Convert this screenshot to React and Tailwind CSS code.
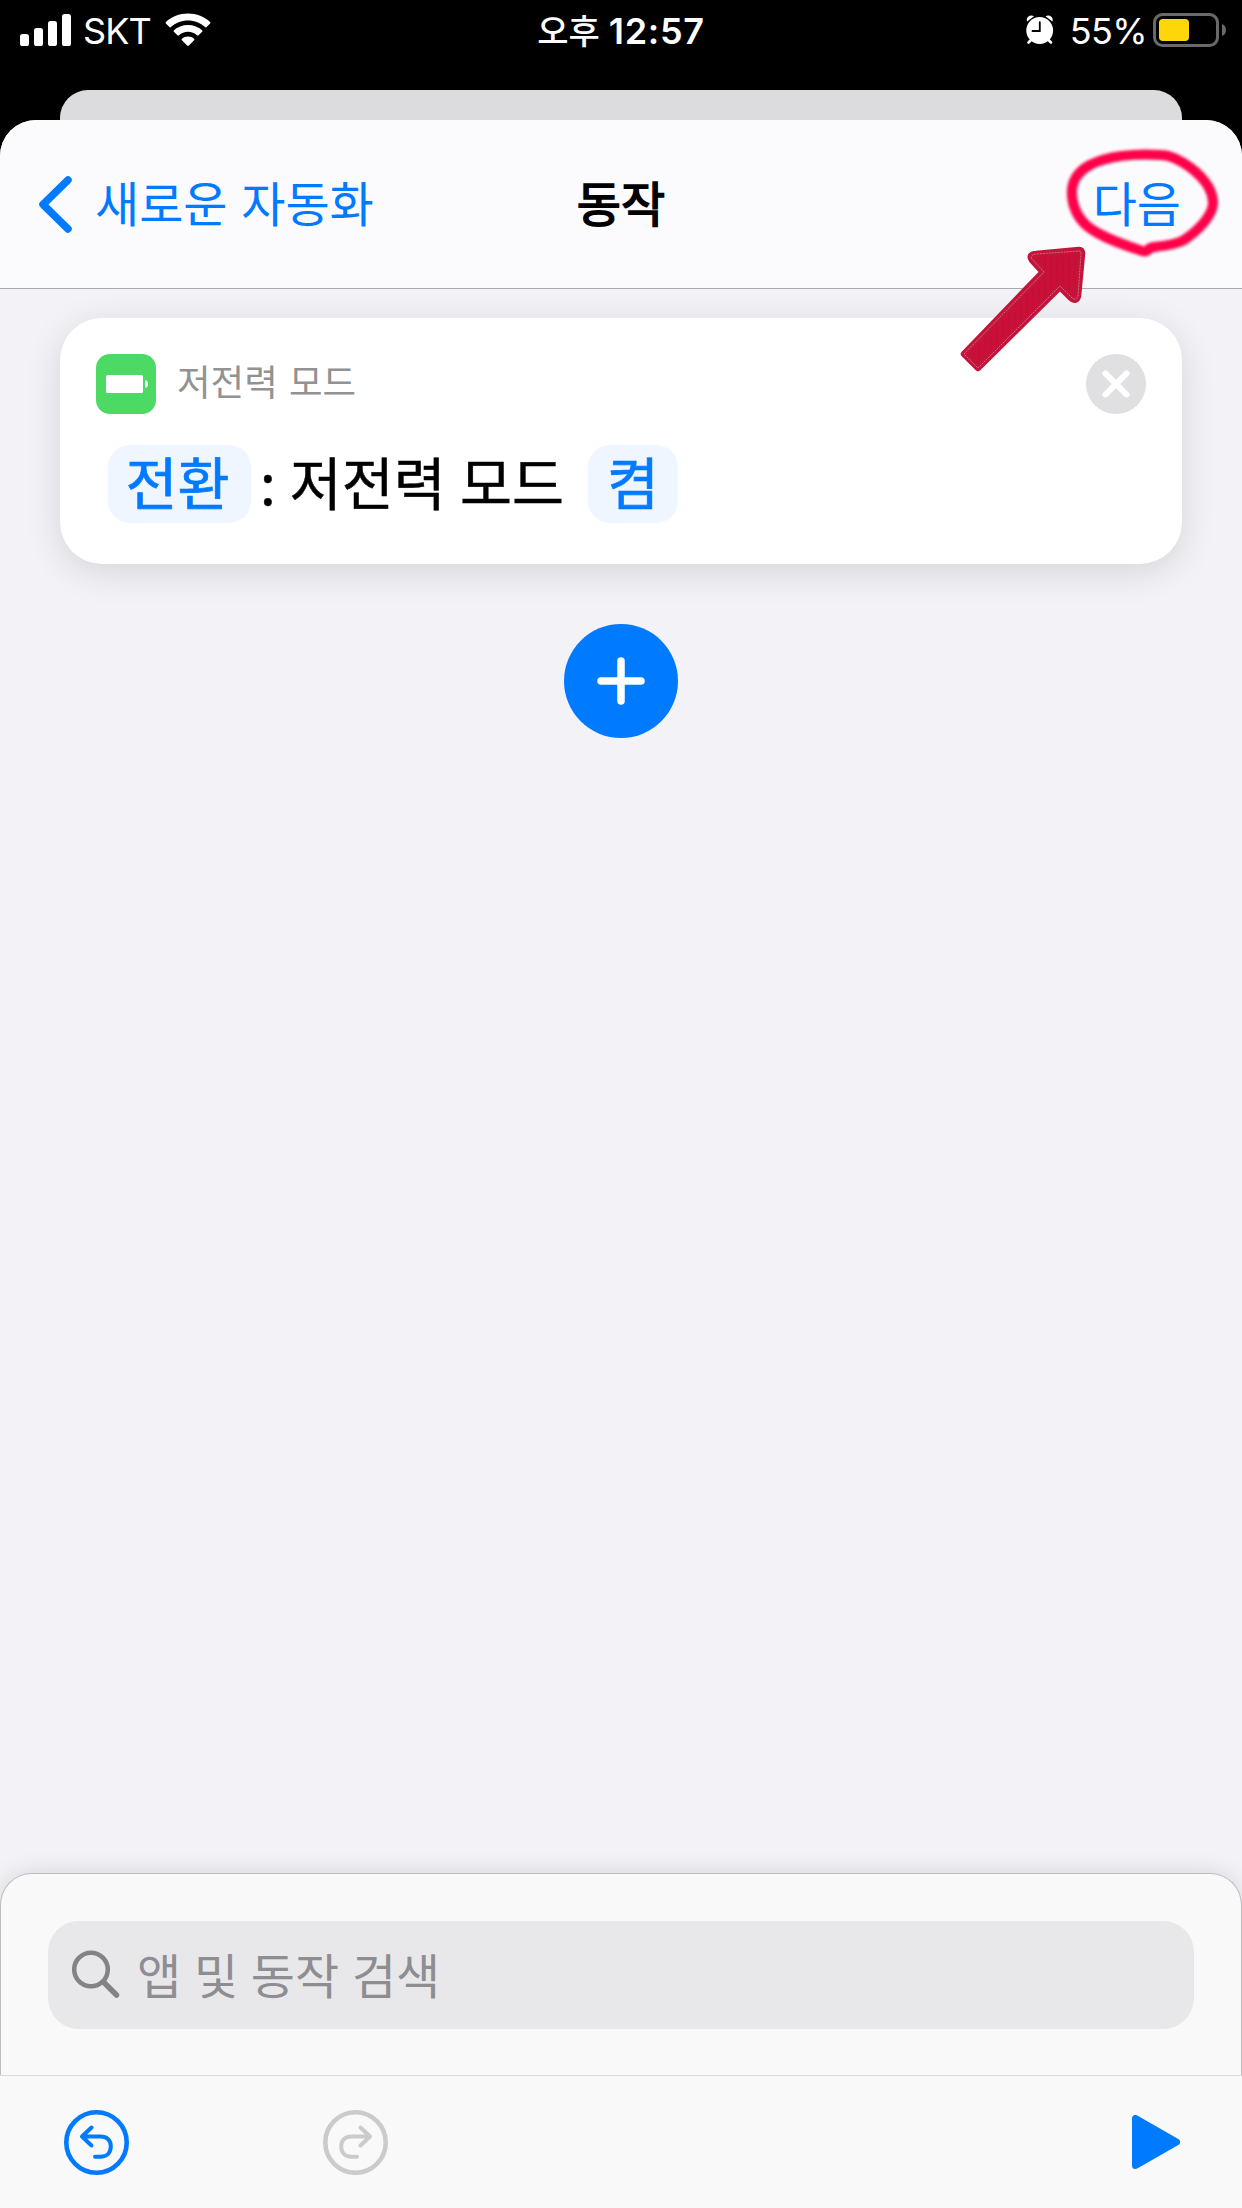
import React from "react";

function SignalIcon() {
  return (
    <svg width="51" height="32" viewBox="0 0 51 32" fill="white">
      <rect x="0" y="20" width="9" height="12" rx="2.6" />
      <rect x="14" y="14" width="9" height="18" rx="2.6" />
      <rect x="28" y="7" width="9" height="25" rx="2.6" />
      <rect x="42" y="0" width="9" height="32" rx="2.6" />
    </svg>
  );
}

function WifiIcon() {
  return (
    <svg width="46" height="34" viewBox="0 0 46 34" fill="white">
      <path d="M23 0.5C31.7 0.5 39.400 3.700 45.100 9C45.600 9.500 45.600 10 45.100 10.500L41.600 14C41.100 14.500 40.600 14.500 40.100 14C35.600 9.900 29.600 7.400 23 7.400S10.400 9.900 5.900 14C5.400 14.500 4.900 14.500 4.400 14L0.900 10.500C0.400 10 0.400 9.500 0.900 9C6.600 3.700 14.300 0.500 23 0.500Z" />
      <path d="M23 12C28.600 12 33.400 14 37.100 17.300C37.600 17.800 37.600 18.300 37.100 18.800L33.600 22.300C33.100 22.800 32.600 22.800 32.100 22.300C29.700 20.200 26.500 18.800 23 18.800S16.300 20.200 13.900 22.300C13.400 22.800 12.900 22.800 12.400 22.300L8.900 18.800C8.400 18.300 8.400 17.800 8.900 17.300C12.600 14 17.400 12 23 12Z" />
      <path d="M23 23.500C25.400 23.500 27.500 24.300 29.100 25.700C29.600 26.200 29.600 26.700 29.100 27.200L23.900 32.600C23.300 33.200 22.700 33.200 22.100 32.600L16.900 27.200C16.400 26.700 16.400 26.200 16.900 25.700C18.500 24.300 20.600 23.500 23 23.500Z" />
    </svg>
  );
}

function AlarmIcon() {
  return (
    <svg width="28" height="30" viewBox="0 0 28 30">
      <g stroke="white" strokeWidth="2.600" strokeLinecap="round">
        <path d="M5 25L2.500 27.500M22.500 25L25 27.500" />
      </g>
      <path d="M1.200 6.500C-0.600 2.500 4 -1.200 8 1.200Z" fill="white" />
      <path d="M26.300 6.500C28.100 2.500 23.500 -1.200 19.500 1.200Z" fill="white" />
      <circle cx="13.700" cy="15.500" r="13.400" fill="white" />
      <path d="M13.800 7.200V16H6.500" fill="none" stroke="black" strokeWidth="1.800" strokeLinecap="round" />
    </svg>
  );
}

function BatteryIcon() {
  return (
    <svg width="73" height="34" viewBox="0 0 73 34">
      <rect x="1.500" y="1.500" width="63" height="31" rx="8" fill="none" stroke="#69696b" strokeWidth="3" />
      <path d="M69 11C71.600 12 73 14 73 17S71.600 22 69 23Z" fill="#69696b" />
      <rect x="6" y="6" width="30" height="22" rx="4" fill="#ffd60a" />
    </svg>
  );
}

function StatusBar() {
  return (
    <div className="grid h-[60px] grid-cols-3 items-center font-['Inter','Noto_Sans_CJK_KR',sans-serif] text-white">
      <div className="flex items-center pl-5">
        <SignalIcon />
        <span className="ml-[12px] pt-[2px] text-[36px] tracking-[-0.9px]">SKT</span>
        <span className="ml-[14px]">
          <WifiIcon />
        </span>
      </div>
      <div className="flex items-center justify-center pt-[2px] text-[36px] font-semibold">
        <span className="mr-[9px] text-[34px] font-medium">오후</span>
        <span className="tracking-[0.7px]">12:57</span>
      </div>
      <div className="flex items-center justify-end pr-4">
        <AlarmIcon />
        <span className="ml-[16px] pt-[2px] text-[36px] tracking-[-0.6px]">55%</span>
        <span className="ml-[6px]">
          <BatteryIcon />
        </span>
      </div>
    </div>
  );
}

function Header() {
  return (
    <header className="grid h-[169px] grid-cols-3 items-center rounded-t-[36px] border-b border-[#a9a9b0] bg-[#fbfbfd] text-[48px] leading-none">
      <button className="flex items-center pl-[39px] text-[#007aff]">
        <svg width="33" height="57" viewBox="0 0 33 57" fill="none" stroke="#007aff" strokeWidth="7.500" strokeLinecap="round" strokeLinejoin="round">
          <path d="M29 4L4 28.500L29 53" />
        </svg>
        <span className="ml-[23px] pb-[7px] whitespace-nowrap [word-spacing:3px]">새로운 자동화</span>
      </button>
      <h1 className="pb-[7px] text-center [-webkit-text-stroke:1.6px_black]">동작</h1>
      <button className="pr-[61px] pb-[7px] text-right text-[#007aff]">다음</button>
    </header>
  );
}

function ActionCard() {
  return (
    <div className="mx-[60px] mt-[29px] h-[246px] rounded-[42px] bg-white px-9 pt-9 shadow-[0_8px_36px_rgba(0,0,0,0.12)]">
      <div className="flex items-center">
        <svg width="60" height="60" viewBox="0 0 60 60">
          <rect width="60" height="60" rx="14" fill="#4cd964" />
          <rect x="10" y="21" width="37" height="18" rx="1.500" fill="white" />
          <path d="M49 26C51 26.500 52 28 52 30S51 33.500 49 34Z" fill="white" />
        </svg>
        <span className="ml-[21px] pb-[6px] text-[36.5px] leading-none text-[#929292] [word-spacing:3px]">저전력 모드</span>
        <svg className="ml-auto" width="60" height="60" viewBox="0 0 60 60">
          <circle cx="30" cy="30" r="30" fill="#e0e0e2" />
          <path d="M19.500 19.500L40.500 40.500M40.500 19.500L19.500 40.500" stroke="white" strokeWidth="6" strokeLinecap="round" />
        </svg>
      </div>
      <div className="mt-[31px] ml-3 flex h-[78px] items-center text-[56.5px] leading-none whitespace-nowrap">
        <span className="flex h-[78px] w-[143px] items-center justify-center rounded-[22px] bg-[#f0f6ff] pr-1 pb-[7px] text-[#007aff] [-webkit-text-stroke:0.7px_#007aff]">전환</span>
        <span className="ml-[9px] pb-[7px] [-webkit-text-stroke:0.5px_black] [word-spacing:1.5px]">: 저전력 모드</span>
        <span className="ml-[24px] flex h-[78px] w-[90px] items-center justify-center rounded-[22px] bg-[#f0f6ff] pb-[7px] text-[#007aff] [-webkit-text-stroke:0.7px_#007aff]">켬</span>
      </div>
    </div>
  );
}

function SearchPanel() {
  return (
    <div className="h-[202px] rounded-t-[32px] border-x border-t border-[#bebec1] bg-[#f9f9f9] px-[47px] pt-[47px] shadow-[0_0_24px_rgba(0,0,0,0.12)]">
      <div className="flex h-[108px] items-center rounded-[31px] bg-[#e8e8ea] pl-6 text-[#8e8e92]">
        <svg className="mb-[2px]" width="48" height="48" viewBox="0 0 48 48" fill="none" stroke="#838387" strokeLinecap="round">
          <circle cx="19" cy="19.500" r="16.800" strokeWidth="4.500" />
          <path d="M32 32.500L44.500 45" strokeWidth="5.500" />
        </svg>
        <span className="ml-[17px] pb-[5px] text-[48px] leading-none [word-spacing:2px]">앱 및 동작 검색</span>
      </div>
    </div>
  );
}

function UndoIcon() {
  return (
    <svg width="65" height="65" viewBox="0 0 65 65" fill="none" stroke="currentColor" strokeLinecap="round" strokeLinejoin="round">
      <circle cx="32.500" cy="32.500" r="30.200" strokeWidth="4.600" />
      <path d="M27.500 17.500L18 26.500L27.500 35.500M18 26.500H36.500C43 26.500 46.800 30.500 46.800 36.500S43 46.700 36.500 46.700H31" strokeWidth="4" />
    </svg>
  );
}

function Toolbar() {
  return (
    <div className="flex h-[133px] items-center border-t border-[#dadadc] bg-[#f9f9f9] pr-[62px] pl-16">
      <button className="text-[#007aff]">
        <UndoIcon />
      </button>
      <button className="ml-[194px] -scale-x-100 text-[#cbcbcb]">
        <UndoIcon />
      </button>
      <svg className="ml-auto" width="48" height="54" viewBox="0 0 48 54">
        <path d="M3.500 3.500V50.500L44.500 27Z" fill="#007aff" stroke="#007aff" strokeWidth="7" strokeLinejoin="round" />
      </svg>
    </div>
  );
}

// Hand-drawn ring and arrow over the "다음" button
function Annotation() {
  return (
    <svg className="pointer-events-none absolute top-[140px] left-[950px]" width="280" height="240" viewBox="950 140 280 240">
      <defs>
        <filter id="soft">
          <feGaussianBlur stdDeviation="1.500" />
        </filter>
        <pattern id="weave" width="6" height="3" patternUnits="userSpaceOnUse">
          <rect width="6" height="3" fill="#cc0f38" />
          <rect width="2" height="2" fill="#bd1238" />
        </pattern>
      </defs>
      <path
        d="M1161 155C1135 153 1107 156 1090 165C1075 173 1071 184 1072 196C1073 208 1077 217 1087 226C1102 238 1127 246 1142 251C1150 253 1144 249 1154 247C1164 246 1177 244 1184 240C1198 231 1213 215 1213 203C1213 187 1200 175 1191 168C1180 160 1169 155 1161 155Z"
        fill="none"
        stroke="#ff0048"
        strokeWidth="10"
        strokeLinejoin="round"
        filter="url(#soft)"
      />
      <path
        d="M964 354L1043 272L1032 260C1029 256 1032 254 1036 254L1079 250C1082 250 1082 252 1082 254L1078 296C1077 300 1074 301 1071 298L1060 287L978 368Z"
        fill="url(#weave)"
        stroke="#c3153b"
        strokeWidth="6.500"
        strokeLinejoin="round"
      />
      <path
        d="M964 354L1044 272L1032 259C1030 256 1033 254 1036 254L1079 251C1081 251 1081 252 1081 254L1078 296C1077 300 1074 300 1071 297L1060 286L978 368Z"
        fill="none"
        stroke="#e07f92"
        strokeWidth="0.800"
        strokeDasharray="2 1"
        strokeLinejoin="round"
      />
    </svg>
  );
}

function App() {
  return (
    <div className="relative flex h-[2208px] w-[1242px] flex-col overflow-hidden bg-black font-['Noto_Sans_CJK_KR',sans-serif]">
      <div className="h-[90px] shrink-0">
        <StatusBar />
      </div>
      <div className="mx-[60px] h-[30px] shrink-0 rounded-t-[28px] bg-[#dcdcde]" />
      <div className="flex flex-1 flex-col rounded-t-[36px] bg-[#f2f2f7]">
        <Header />
        <main className="flex-1">
          <ActionCard />
          <button className="mx-auto mt-[60px] flex size-[114px] items-center justify-center rounded-full bg-[#007aff]">
            <svg width="48" height="48" viewBox="0 0 48 48" stroke="white" strokeWidth="7.500" strokeLinecap="round">
              <path d="M24 4V44M4 24H44" />
            </svg>
          </button>
        </main>
        <SearchPanel />
        <Toolbar />
      </div>
      <Annotation />
    </div>
  );
}

export default App;
